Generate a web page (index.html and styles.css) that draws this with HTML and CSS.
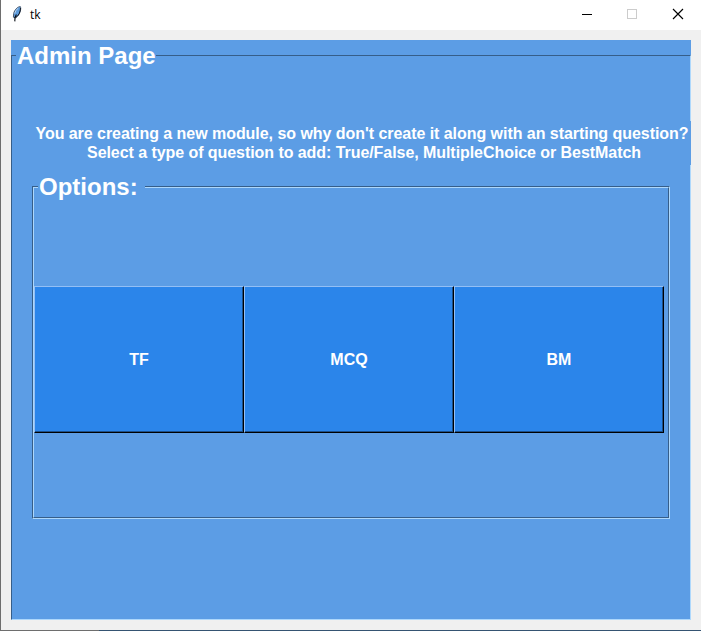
FILE: index.html
```html
<!DOCTYPE html>
<html lang="en">
<head>
<meta charset="utf-8">
<title>tk</title>
<link rel="stylesheet" href="styles.css">
</head>
<body>
<div class="window">
  <header class="titlebar">
    <svg class="feather" width="12" height="18" viewBox="0 0 12 18">
      <path d="M9.3 1.6 C6.8 1.6 3.6 4.6 2.7 8.4 L2.4 12.2 L4.4 12.8 C7 11.4 8.6 9 9.3 6 C9.8 4 9.9 2.8 9.3 1.6 Z" fill="#5c9bdc" stroke="#3c4a5c" stroke-width="0.9"/>
      <path d="M7.4 3 C5.4 4.4 4.2 6.4 3.8 8.6" fill="none" stroke="#b9d4ee" stroke-width="1"/>
      <path d="M9.5 3 C9.4 7 7.8 10.6 4.6 12.6" fill="none" stroke="#0c1420" stroke-width="0.9"/>
      <path d="M5.4 9.4 L4 12.4 L3.8 16.4" fill="none" stroke="#050a12" stroke-width="1.1"/>
    </svg>
    <span class="title">tk</span>
    <div class="controls">
      <svg width="46" height="30" shape-rendering="crispEdges"><rect x="17" y="14" width="10" height="1" fill="#000"/></svg>
      <svg width="46" height="30" shape-rendering="crispEdges"><rect x="16.5" y="9.5" width="9" height="9" fill="none" stroke="#ccc"/></svg>
      <svg width="46" height="30"><path d="M16 9 L26 19 M26 9 L16 19" stroke="#000" stroke-width="1.15"/></svg>
    </div>
  </header>
  <main class="content">
    <section class="page">
      <div class="page-frame">
        <h1 class="page-title">Admin Page</h1>
        <p class="message"><span class="line line-first">You are creating a new module, so why don't create it along with an starting question?</span><span class="line line-second">Select a type of question to add: True/False, MultipleChoice or BestMatch</span></p>
        <div class="options">
          <div class="options-inner">
            <h2 class="options-title">Options:</h2>
            <div class="buttons">
              <button>TF</button><button>MCQ</button><button>BM</button>
            </div>
          </div>
        </div>
      </div>
    </section>
  </main>
  <footer class="edge"></footer>
</div>
</body>
</html>
```

FILE: styles.css
```css
* { box-sizing: border-box; }

body {
  margin: 0;
  overflow: hidden;
  font-family: "Liberation Sans", Arial, sans-serif;
}

.window {
  display: flex;
  flex-direction: column;
  width: 701px;
  height: 631px;
  background: #f0f0f0;
}

.titlebar {
  display: flex;
  align-items: center;
  height: 30px;
  padding-left: 10px;
  background: #fff;
  border-left: 1px solid #6e6e6e;
}

.feather { margin-top: -3px; }

.title {
  margin-left: 7px;
  font: 12px/16px "Open Sans", sans-serif;
  color: #000;
}

.controls {
  display: flex;
  margin-left: auto;
  margin-right: -2px;
}

.controls svg { display: block; }

.content {
  flex: 1;
  padding: 10px;
  border-left: 1px solid #6e6e6e;
}

.page {
  height: 580px;
  padding-top: 15px;
  background: #5c9de5;
  color: #fff;
}

.page-frame {
  display: flow-root;
  height: 565px;
  border: 1px solid;
  border-color: #365e89 #aed8fc #aed8fc #365e89;
}

.page-title, .options-title {
  width: max-content;
  margin: -14px 0 0 4px;
  padding: 0 0 0 1px;
  height: 28px;
  font-size: 24px;
  line-height: 28px;
  background: #5c9de5;
}

.message {
  width: 658px;
  height: 44px;
  margin: 51px -1px 0 21px;
  padding-top: 3px;
  background: #5c9de5;
  font-size: 16px;
  font-weight: bold;
  text-align: center;
}

.line {
  display: block;
  height: 19px;
  line-height: 19px;
  white-space: nowrap;
}

.line-first { letter-spacing: -0.045px; }

.line-second {
  padding-left: 4px;
  letter-spacing: -0.06px;
}

.options {
  width: 638px;
  height: 333px;
  margin: 21px 0 0 20px;
  border: 1px solid;
  border-color: #365e89 #aed8fc #aed8fc #365e89;
}

.options-inner {
  display: flow-root;
  height: 331px;
  border: 1px solid;
  border-color: #aed8fc #365e89 #365e89 #aed8fc;
}

.options-title {
  width: 107px;
  margin-top: -15px;
}

.buttons {
  display: flex;
  margin-top: 85px;
}

button {
  width: 210px;
  height: 147px;
  padding: 0;
  border: 1px solid;
  border-color: #93bff5 #000 #000 #93bff5;
  border-radius: 0;
  background: #2b85ea;
  box-shadow: inset -1px -1px #1b508c;
  color: #fff;
  font: bold 16px "Liberation Sans", Arial, sans-serif;
}

.edge {
  height: 1px;
  background: linear-gradient(to right, #6e6e6e 99px, #355372 99px);
}
```
